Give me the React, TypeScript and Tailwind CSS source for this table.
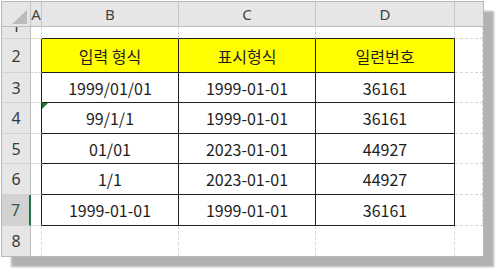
import React from "react";

const rows: { n: string; cells: string[]; yellow?: boolean; flag?: boolean; sel?: boolean }[] = [
  { n: "2", cells: ["입력 형식", "표시형식", "일련번호"], yellow: true },
  { n: "3", cells: ["1999/01/01", "1999-01-01", "36161"] },
  { n: "4", cells: ["99/1/1", "1999-01-01", "36161"], flag: true },
  { n: "5", cells: ["01/01", "2023-01-01", "44927"] },
  { n: "6", cells: ["1/1", "2023-01-01", "44927"] },
  { n: "7", cells: ["1999-01-01", "1999-01-01", "36161"], sel: true },
];

const grid = "[border-right-style:dashed] [border-bottom-style:dashed] border-r border-b border-[#d6d6d6]";
const rowHead = "bg-[#e6e6e6] border-r border-b border-r-[#bdbdbd] border-b-[#d2d2d2] flex items-center justify-center text-[16px] text-[#3a3a3a] font-['Noto_Sans',sans-serif]";
const colHead = "bg-[#e6e6e6] border-r border-b border-r-[#c6c6c6] border-b-[#bdbdbd] flex items-center justify-center text-[15px] text-[#444] font-['Noto_Sans',sans-serif]";

export default function App() {
  return (
    <div className="w-[500px] h-[273px] bg-white pl-[1px] pt-[1px]">
      <div className="w-[483px] border border-[#b8b8b8] bg-white shadow-[10px_10px_2px_rgba(0,0,0,0.3)] font-['Noto_Sans_CJK_KR','Noto_Sans',sans-serif]">
        <div className="grid grid-cols-[29px_11px_137px_137px_139px_28px] grid-rows-[25px_12px_34px_30px_31px_30px_31px_31px_30px]">
          {/* header row */}
          <div className="bg-[#e6e6e6] border-r border-b border-r-[#c6c6c6] border-b-[#bdbdbd] flex items-end justify-end pr-[3px] pb-[2px]">
            <svg width="15" height="14" viewBox="0 0 15 14">
              <polygon points="15,0 15,14 0,14" fill="#bcbcbc" />
            </svg>
          </div>
          <div className={colHead + " overflow-hidden"}>A</div>
          <div className={colHead}>B</div>
          <div className={colHead}>C</div>
          <div className={colHead}>D</div>
          <div className="bg-[#e6e6e6] border-b border-b-[#bdbdbd]"></div>

          {/* row 1 (partially visible) */}
          <div className="bg-[#e6e6e6] border-r border-b border-r-[#bdbdbd] border-b-[#d2d2d2] flex items-start justify-center overflow-hidden text-[16px] text-[#3a3a3a] font-['Noto_Sans',sans-serif]">
            <span className="block leading-[16px] -mt-[9px]">1</span>
          </div>
          <div className={grid}></div>
          <div className={grid + " [border-bottom-style:solid] border-b-[#1f1f1f]"}></div>
          <div className={grid + " [border-bottom-style:solid] border-b-[#1f1f1f]"}></div>
          <div className={grid + " [border-bottom-style:solid] border-b-[#1f1f1f]"}></div>
          <div className={grid}></div>

          {rows.map((r) => (
            <React.Fragment key={r.n}>
              {r.sel ? (
                <div className="bg-[#d2d2d2] border-b border-b-[#d2d2d2] border-r-2 border-r-[#217346] flex items-center justify-center text-[16px] text-[#2f5e45] font-['Noto_Sans',sans-serif]">
                  {r.n}
                </div>
              ) : (
                <div className={rowHead}>{r.n}</div>
              )}
              <div className={grid + " [border-right-style:solid] border-r-[#1f1f1f]"}></div>
              {r.cells.map((c, i) => (
                <div
                  key={i}
                  className={
                    "border-r border-b border-[#1f1f1f] flex items-center justify-center text-[16px] text-[#1e1e1e] " +
                    (r.yellow ? "bg-[#ffff00]" : "bg-white") +
                    (r.flag && i === 0 ? " relative" : "")
                  }
                >
                  {r.flag && i === 0 ? (
                    <svg className="absolute left-0 top-0" width="6" height="6" viewBox="0 0 6 6">
                      <polygon points="0,0 6,0 0,6" fill="#1f7a2e" />
                    </svg>
                  ) : null}
                  {c}
                </div>
              ))}
              <div className={grid}></div>
            </React.Fragment>
          ))}

          {/* row 8 */}
          <div className={rowHead + " !border-b-0"}>8</div>
          <div className={grid + " !border-b-0"}></div>
          <div className={grid + " !border-b-0"}></div>
          <div className={grid + " !border-b-0"}></div>
          <div className={grid + " !border-b-0"}></div>
          <div className="border-b-0"></div>
        </div>
      </div>
    </div>
  );
}
